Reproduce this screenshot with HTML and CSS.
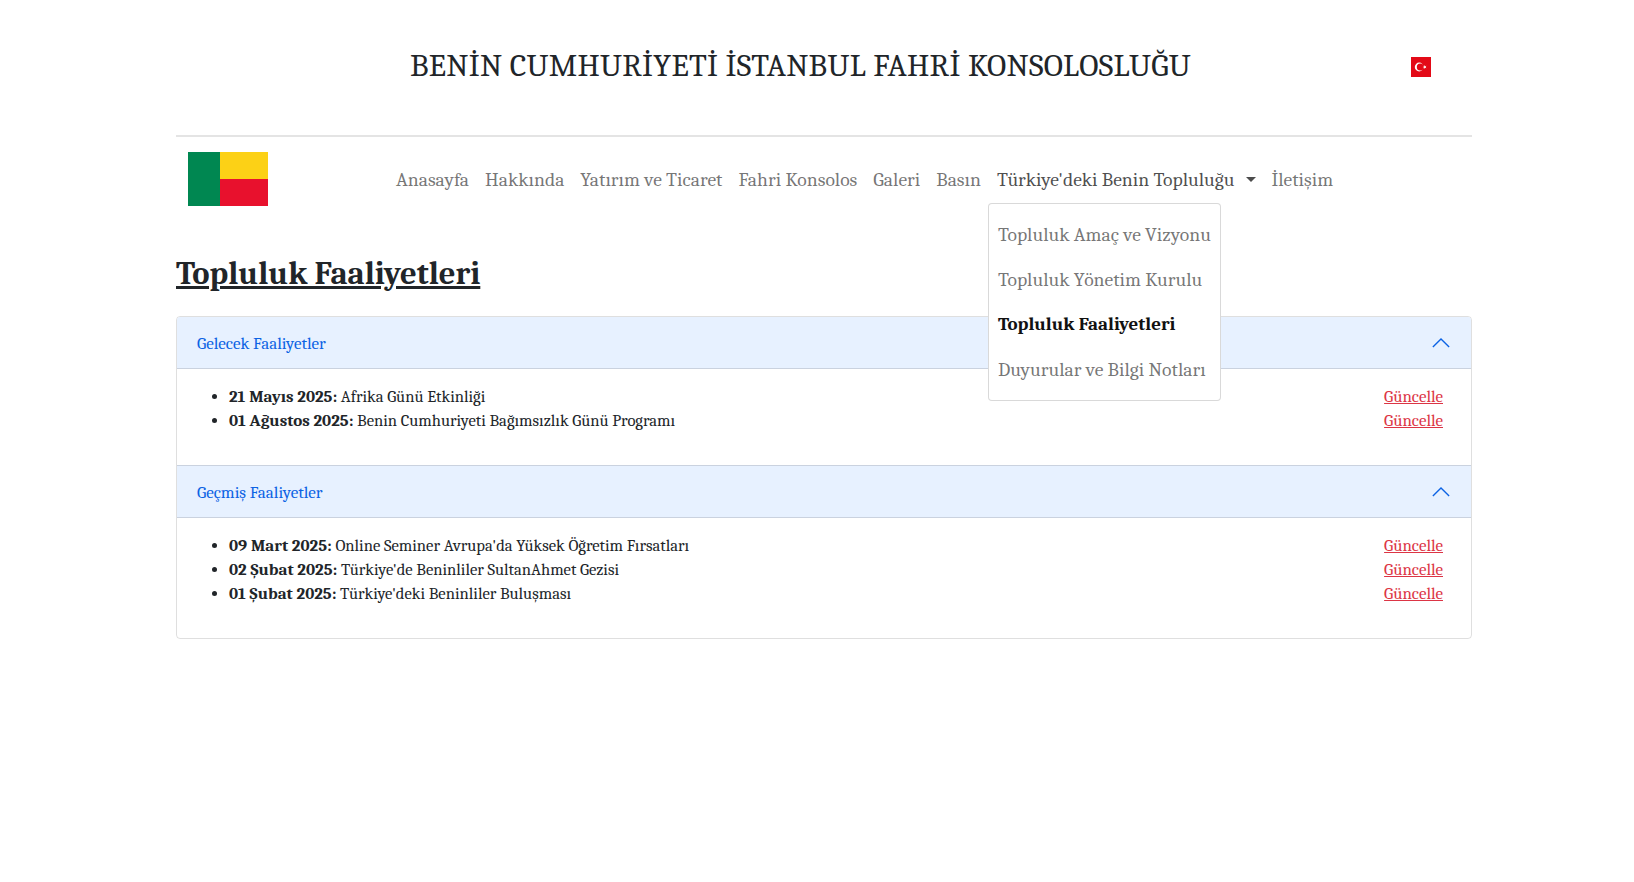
FILE: index.html
```html
<!DOCTYPE html>
<html lang="tr">
<head>
<meta charset="utf-8">
<title>Topluluk Faaliyetleri</title>
<link rel="stylesheet" href="styles.css">
</head>
<body>
<div class="container">
  <header class="site-header">
    <div class="site-title">BENİN CUMHURİYETİ İSTANBUL FAHRİ KONSOLOSLUĞU</div>
    <a class="lang" href="#" aria-label="Türkçe">
      <svg class="lang-flag" viewBox="0 0 20 20" width="20" height="20">
        <rect width="20" height="20" fill="#e30a17"/>
        <circle cx="8.2" cy="10" r="4.4" fill="#fff"/>
        <circle cx="9.3" cy="10" r="3.5" fill="#e30a17"/>
        <polygon fill="#fff" points="11.6,10 15.4,8.7 13.1,11.9 13.1,8.1 15.4,11.3"/>
      </svg>
    </a>
  </header>
  <nav class="navbar">
    <a class="brand" href="#" aria-label="Benin">
      <svg class="brand-flag" viewBox="0 0 80 54" width="80" height="54">
        <rect width="80" height="27" fill="#fcd116"/>
        <rect y="27" width="80" height="27" fill="#e8112d"/>
        <rect width="32" height="54" fill="#008751"/>
      </svg>
    </a>
    <ul class="nav">
      <li><a class="nav-link" href="#">Anasayfa</a></li>
      <li><a class="nav-link" href="#">Hakkında</a></li>
      <li><a class="nav-link" href="#">Yatırım ve Ticaret</a></li>
      <li><a class="nav-link" href="#">Fahri Konsolos</a></li>
      <li><a class="nav-link" href="#">Galeri</a></li>
      <li><a class="nav-link" href="#">Basın</a></li>
      <li class="dropdown">
        <a class="nav-link open" href="#">Türkiye'deki Benin Topluluğu<span class="caret"></span></a>
        <div class="dropdown-menu">
          <a class="dropdown-item" href="#">Topluluk Amaç ve Vizyonu</a>
          <a class="dropdown-item" href="#">Topluluk Yönetim Kurulu</a>
          <a class="dropdown-item active" href="#">Topluluk Faaliyetleri</a>
          <a class="dropdown-item" href="#">Duyurular ve Bilgi Notları</a>
        </div>
      </li>
      <li><a class="nav-link" href="#">İletişim</a></li>
    </ul>
  </nav>
  <h1 class="page-title">Topluluk Faaliyetleri</h1>
  <section class="accordion">
    <div class="acc-header">
      <span class="acc-title">Gelecek Faaliyetler</span>
      <svg class="chevron" viewBox="0 0 16 16" width="20" height="20"><path fill="none" stroke="currentColor" stroke-width="1.1" d="M1.5 11.2 8 4.8l6.5 6.4"/></svg>
    </div>
    <div class="acc-body">
      <ul class="events">
        <li><div class="event"><span><b>21 Mayıs 2025:</b> Afrika Günü Etkinliği</span><a href="#">Güncelle</a></div></li>
        <li><div class="event"><span><b>01 Ağustos 2025:</b> Benin Cumhuriyeti Bağımsızlık Günü Programı</span><a href="#">Güncelle</a></div></li>
      </ul>
    </div>
    <div class="acc-header second">
      <span class="acc-title">Geçmiş Faaliyetler</span>
      <svg class="chevron" viewBox="0 0 16 16" width="20" height="20"><path fill="none" stroke="currentColor" stroke-width="1.1" d="M1.5 11.2 8 4.8l6.5 6.4"/></svg>
    </div>
    <div class="acc-body">
      <ul class="events">
        <li><div class="event"><span><b>09 Mart 2025:</b> Online Seminer Avrupa'da Yüksek Öğretim Fırsatları</span><a href="#">Güncelle</a></div></li>
        <li><div class="event"><span><b>02 Şubat 2025:</b> Türkiye'de Beninliler SultanAhmet Gezisi</span><a href="#">Güncelle</a></div></li>
        <li><div class="event"><span><b>01 Şubat 2025:</b> Türkiye'deki Beninliler Buluşması</span><a href="#">Güncelle</a></div></li>
      </ul>
    </div>
  </section>
</div>
</body>
</html>
```
FILE: styles.css
```css
* { box-sizing: border-box; }
html, body { margin: 0; padding: 0; }
body {
  background: #fff;
  color: #212529;
  font-family: Caladea, Cambria, "Noto Serif", serif;
  font-size: 16px;
  line-height: 24px;
}
a { text-decoration: none; }
ul { list-style: none; margin: 0; padding: 0; }
.container { width: 1296px; margin-left: 176px; }

.site-header {
  display: flex;
  align-items: center;
  gap: 15px;
  height: 137px;
  padding: 0 41px 0 29px;
  border-bottom: 2px solid #e4e4e4;
}
.site-title {
  flex: 1;
  text-align: center;
  font-size: 32px;
  letter-spacing: .26px;
  line-height: 38px;
  margin-bottom: 4px;
}
.lang { display: flex; }
.lang-flag { display: block; margin-bottom: 2px; }

.navbar {
  display: flex;
  align-items: center;
  padding: 15px 12px 16px;
}
.brand, .brand-flag { display: block; }
.nav {
  display: flex;
  align-items: center;
  margin-left: 120px;
}
.nav-link {
  display: block;
  padding: 9px 8px 7px;
  font-size: 19.64px;
  line-height: 26px;
  color: rgba(0, 0, 0, .55);
}
.nav-link.open { color: rgba(0, 0, 0, .7); }
.caret {
  display: inline-block;
  margin-left: 11px;
  vertical-align: 4px;
  border-top: 5px solid;
  border-left: 5px solid transparent;
  border-right: 5px solid transparent;
}
.dropdown { position: relative; }
.dropdown-menu {
  position: absolute;
  z-index: 10;
  top: 45px;
  left: -1px;
  width: 233px;
  padding: 8px 0;
  background: #fff;
  border: 1px solid rgba(0, 0, 0, .15);
  border-radius: 4px;
}
.dropdown-item {
  display: block;
  padding: 9px;
  height: 45px;
  font-size: 19.64px;
  line-height: 27px;
  white-space: nowrap;
  color: rgba(0, 0, 0, .55);
}
.dropdown-item.active { color: #111; font-size: 19px; font-weight: 700; }

.page-title {
  margin: 33px 0 23px;
  font-size: 32.6px;
  line-height: 38px;
  font-weight: 700;
  text-decoration: underline;
}

.accordion {
  border: 1px solid rgba(0, 0, 0, .125);
  border-radius: 4px;
}
.acc-header {
  display: flex;
  align-items: center;
  justify-content: space-between;
  height: 52px;
  padding: 0 20px;
  font-size: 17px;
  color: #0c63e4;
  background: #e7f1ff;
  border-bottom: 1px solid rgba(0, 0, 0, .125);
  border-radius: 3px 3px 0 0;
}
.acc-title { padding-top: 3px; }
.acc-header.second {
  height: 53px;
  border-top: 1px solid rgba(0, 0, 0, .125);
  border-radius: 0;
}
.chevron { display: block; }
.acc-body { padding: 16px 20px; }
.events {
  list-style: disc;
  padding-left: 32px;
  margin-bottom: 16px;
  font-size: 16.6px;
}
.events b { font-size: 17px; }
.event {
  display: flex;
  justify-content: space-between;
  padding-right: 8px;
}
.event a {
  font-size: 16.9px;
  color: #dc3545;
  text-decoration: underline;
}
```
